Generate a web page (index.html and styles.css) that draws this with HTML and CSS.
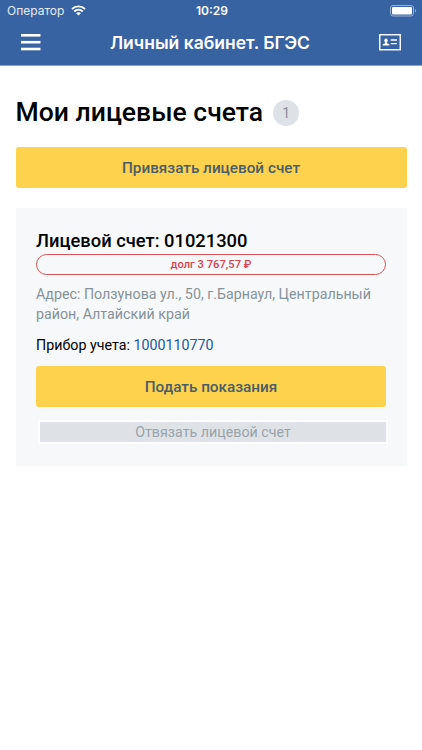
FILE: index.html
```
<!DOCTYPE html>
<html lang="ru">
<head>
    <meta charset="UTF-8">
    <meta name="viewport" content="width=device-width, initial-scale=1.0">
    <title>Личный кабинет. БГЭС</title>
    <link rel="stylesheet" href="styles.css">
</head>
<body>
    <header class="header">
        <!-- Status bar -->
        <div class="status-bar">
            <div class="carrier">
                <span>Оператор</span>
                <svg width="15" height="11" viewBox="0 0 15 11" fill="none" stroke="#fff" stroke-width="1.9">
                    <path d="M1 4C4.6 .5 10.4 .5 14 4"/>
                    <path d="M3.3 6.5C5.7 4.2 9.3 4.2 11.7 6.5"/>
                    <path d="M7.5 10.6L5.1 8.2C6.5 6.9 8.5 6.9 9.9 8.2Z" fill="#fff" stroke="none"/>
                </svg>
            </div>
            <span class="time">10:29</span>
            <svg class="battery" width="27" height="12" viewBox="0 0 27 12">
                <rect x=".5" y=".5" width="23" height="10.5" rx="2.5" fill="none" stroke="#9bb1d3"/>
                <rect x="2" y="2" width="20" height="7.5" rx="1" fill="#fff"/>
                <path d="M25 4C26.6 4.6 26.6 6.9 25 7.5Z" fill="#9bb1d3"/>
            </svg>
        </div>

        <!-- Navigation bar -->
        <div class="nav-bar">
            <svg width="20" height="18" viewBox="0 0 20 18" fill="#fff">
                <rect y="1" width="19.5" height="2.6"/>
                <rect y="7.9" width="19.5" height="2.6"/>
                <rect y="14.7" width="19.5" height="2.6"/>
            </svg>
            <div class="nav-title">Личный кабинет. БГЭС</div>
            <svg width="22" height="17" viewBox="0 0 22 17">
                <rect x=".75" y=".75" width="20.5" height="15" fill="none" stroke="#fff" stroke-width="1.4"/>
                <ellipse cx="7" cy="6.6" rx="1.7" ry="2.1" fill="#fff"/>
                <path d="M3.6 11.5V10.7C3.6 9.9 6 9.7 6.2 9V8H7.8V9C8 9.7 10.4 9.9 10.4 10.7V11.5Z" fill="#fff"/>
                <path d="M11.7 6H18M11.7 9.6H18" stroke="#fff" stroke-width="1.3"/>
            </svg>
        </div>
    </header>

    <main class="container">
        <div class="heading">
            <h1>Мои лицевые счета</h1>
            <span class="count">1</span>
        </div>
        <button type="button" class="button">Привязать лицевой счет</button>

        <!-- Account card -->
        <div class="account">
            <h2>Лицевой счет: 01021300</h2>
            <div class="debt">долг 3 767,57 ₽</div>
            <p class="address">Адрес: Ползунова ул., 50, г.Барнаул, Центральный район, Алтайский край</p>
            <p class="meter">Прибор учета: <a href="#">1000110770</a></p>
            <button type="button" class="button">Подать показания</button>
            <button type="button" class="button-unlink">Отвязать лицевой счет</button>
        </div>
    </main>
</body>
</html>
```
FILE: styles.css
```
* {
    box-sizing: border-box;
}
body {
    font-family: Roboto, sans-serif;
    margin: 0;
    background-color: #fff;
    color: #000;
}
.header {
    height: 66px;
    background-color: #3763a2;
    border-bottom: 1px solid #8fa7c9;
    color: #fff;
    font-family: Inter, sans-serif;
}
.status-bar {
    display: grid;
    grid-template-columns: 1fr auto 1fr;
    align-items: center;
    height: 21px;
    padding: 0 5px 0 7px;
    font-size: 12px;
}
.carrier {
    display: flex;
    align-items: center;
    gap: 7px;
    color: #e6ecf6;
}
.time {
    font-weight: 600;
}
.battery {
    justify-self: end;
}
.nav-bar {
    display: flex;
    align-items: center;
    justify-content: space-between;
    height: 42px;
    padding: 0 21px;
}
.nav-title {
    font-size: 17.5px;
    font-weight: 600;
    white-space: nowrap;
}
.container {
    padding: 30px 15.5px 0;
}
.heading {
    display: flex;
    align-items: center;
    height: 31px;
    margin-bottom: 20px;
}
h1, h2, p {
    margin: 0;
}
h1 {
    font-size: 26.55px;
    line-height: 31px;
    font-weight: 500;
    white-space: nowrap;
}
.count {
    width: 26px;
    height: 26px;
    margin: 3px 0 0 10px;
    border-radius: 50%;
    background-color: #dee2e6;
    color: #868e96;
    font-size: 14px;
    line-height: 26px;
    text-align: center;
}
.button {
    display: block;
    width: 100%;
    height: 41px;
    padding: 0;
    border: none;
    border-radius: 3px;
    background-color: #ffd24d;
    color: #495e68;
    font-family: inherit;
    font-size: 15.3px;
    font-weight: 500;
}
.account {
    height: 258px;
    margin-top: 20px;
    padding: 21px 20.5px;
    background-color: #f6f8fa;
}
h2 {
    font-size: 18.35px;
    line-height: 24px;
    font-weight: 500;
    white-space: nowrap;
}
.debt {
    height: 21px;
    margin-top: 1px;
    border: 1px solid #d9535b;
    border-radius: 11px;
    color: #d9434e;
    font-size: 11.2px;
    font-weight: 500;
    line-height: 19px;
    text-align: center;
}
.address {
    margin-top: 9px;
    color: #869299;
    font-size: 14.25px;
    line-height: 20px;
}
.meter {
    margin: 11px 0;
    font-size: 14.25px;
    line-height: 20px;
}
.meter a {
    color: #2457a0;
    text-decoration: none;
}
.button-unlink {
    display: block;
    width: 100%;
    height: 24px;
    margin: 13px 0 0 2px;
    padding: 0;
    border: 2px solid #fff;
    background-color: #dee2e6;
    color: #9aa3ac;
    font-family: inherit;
    font-size: 14.25px;
}
```
